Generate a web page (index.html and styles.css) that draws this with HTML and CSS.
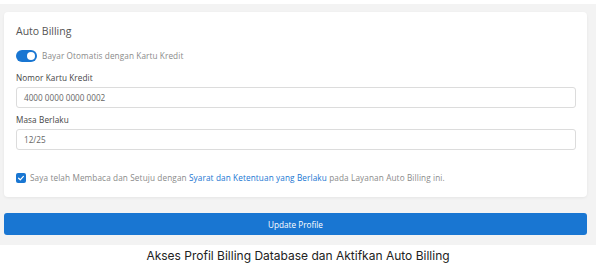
FILE: index.html
```html
<!doctype html>
<html>
  <head>
    <title>Auto Billing</title>
    <meta name="viewport" content="width=device-width">
    <link rel="stylesheet" href="styles.css">
  </head>
  <body>

    <div class="panel">
      <div class="card">
        <h2 class="card-title">Auto Billing</h2>

        <label class="switch-row">
          <span class="switch"><span class="knob"></span></span>
          <span>Bayar Otomatis dengan Kartu Kredit</span>
        </label>

        <div class="field">
          <label class="field-label">Nomor Kartu Kredit</label>
          <div class="input">4000 0000 0000 0002</div>
        </div>

        <div class="field">
          <label class="field-label">Masa Berlaku</label>
          <div class="input">12/25</div>
        </div>

        <label class="agree">
          <span class="check">
            <svg width="8" height="8" viewBox="0 0 8 8"><path d="M1.6 4.2 L3.3 5.8 L6.4 2.4" fill="none" stroke="#fff" stroke-width="1.2" stroke-linecap="round" stroke-linejoin="round"/></svg>
          </span>
          <span>Saya telah Membaca dan Setuju dengan <a href="#">Syarat dan Ketentuan yang Berlaku</a> pada Layanan Auto Billing ini.</span>
        </label>
      </div>

      <button class="submit">Update Profile</button>
    </div>

    <p class="caption">Akses Profil Billing Database dan Aktifkan Auto Billing</p>

  </body>
</html>
```

FILE: styles.css
```css
html, body {
  margin: 0;
  padding: 0;
  background: #fff;
}
body {
  font-family: "Open Sans", "Liberation Sans", sans-serif;
}
.panel {
  margin-top: 4px;
  width: 583px;
  padding: 8px 9px 10px 4px;
  background: #f3f3f3;
}
.card {
  background: #fff;
  border-radius: 4px;
  box-shadow: 0 1px 3px rgba(0,0,0,0.06);
  padding: 12px 11px 14px 12px;
}
.card-title {
  margin: 0;
  font-size: 10.5px;
  line-height: 14px;
  font-weight: 500;
  color: #555;
}
.switch-row {
  display: flex;
  align-items: center;
  gap: 5px;
  margin-top: 12px;
  font-size: 8.2px;
  line-height: 12px;
  letter-spacing: 0.1px;
  color: #8a8a8a;
}
.switch {
  width: 21px;
  height: 12px;
  border-radius: 6px;
  background: #1976d2;
  display: flex;
  justify-content: flex-end;
  align-items: center;
  padding: 0 2px;
  box-sizing: border-box;
}
.knob {
  width: 8px;
  height: 8px;
  border-radius: 50%;
  background: #fff;
}
.field {
  margin-top: 11px;
}
.field + .field {
  margin-top: 7px;
}
.field-label {
  display: block;
  font-size: 8.2px;
  line-height: 10px;
  letter-spacing: 0.1px;
  color: #444;
  margin-bottom: 4px;
}
.input {
  height: 19px;
  border: 1px solid #dcdcdc;
  border-radius: 3px;
  padding: 0 7px;
  font-size: 8.2px;
  line-height: 19px;
  color: #666;
}
.agree {
  display: flex;
  align-items: center;
  margin-top: 23px;
  font-size: 8.2px;
  line-height: 10px;
  letter-spacing: 0.12px;
  color: #8a8a8a;
}
.agree a {
  color: #1976d2;
  text-decoration: none;
}
.check {
  width: 10px;
  height: 10px;
  border-radius: 2px;
  background: #1976d2;
  display: flex;
  align-items: center;
  justify-content: center;
  margin-right: 4px;
}
.submit {
  display: block;
  width: 100%;
  height: 22px;
  margin-top: 16px;
  border: 0;
  border-radius: 3px;
  background: #1976d2;
  color: #fff;
  font-family: inherit;
  font-size: 8.2px;
}
.caption {
  margin: 3px 0 0;
  width: 596px;
  text-align: center;
  font-family: Inter, Roboto, sans-serif;
  font-size: 12px;
  line-height: 16px;
  color: #222;
}
```
